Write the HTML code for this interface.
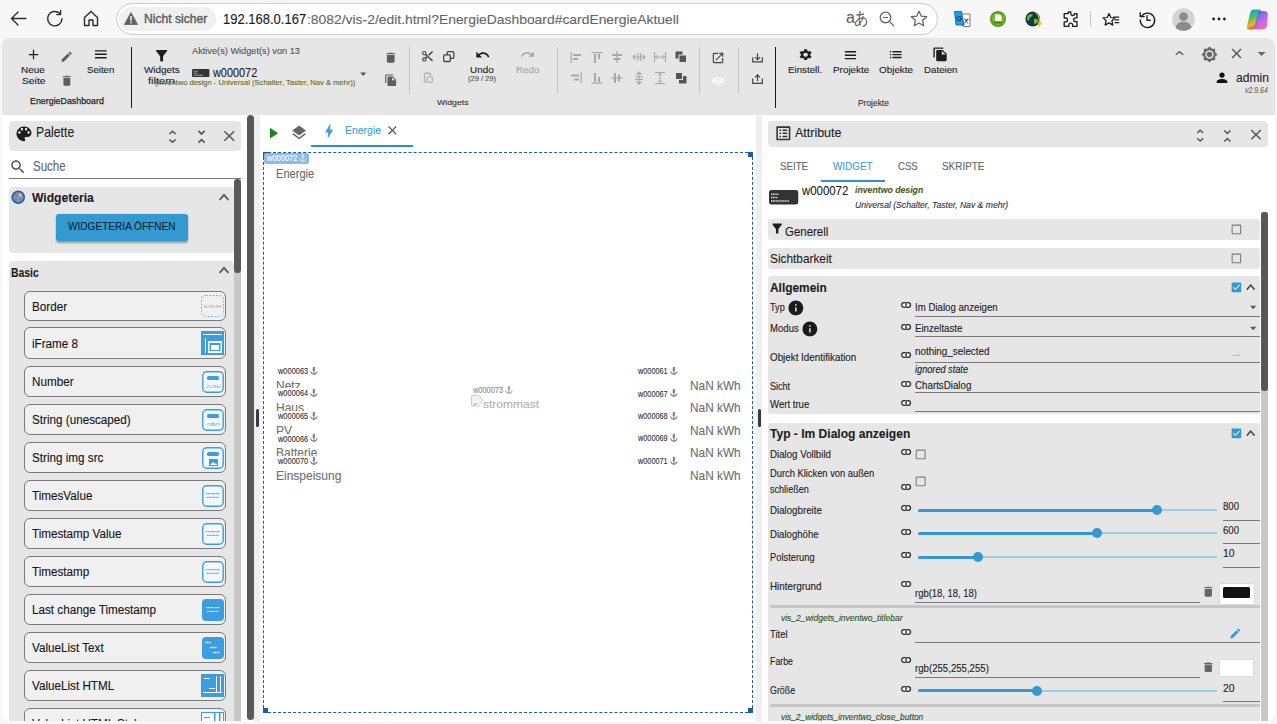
<!DOCTYPE html>
<html><head><meta charset="utf-8"><title>vis-2 editor</title>
<style>
html,body{margin:0;padding:0;width:1277px;height:724px;overflow:hidden;background:#f7f7f7}
body{position:relative;font-family:"Liberation Sans",sans-serif}
.t{position:absolute;white-space:nowrap;line-height:1;transform-origin:0 0;font-family:"Liberation Sans",sans-serif;-webkit-text-stroke:0.12px currentColor}
.r{position:absolute;box-sizing:border-box}
.i{position:absolute;overflow:visible}
</style></head><body>
<div class="r" style="left:0px;top:0px;width:1277px;height:724px;background:#f7f7f7;"></div>
<div class="r" style="left:116px;top:3px;width:822px;height:32px;border:1px solid #cbcbcb;border-radius:16px;background:#fff"></div>
<div class="r" style="left:119px;top:7px;width:97px;height:24px;border-radius:12px;background:#f0f0f0"></div>
<svg class="i" style="left:124px;top:12px;width:14px;height:13px;" viewBox="0 0 14 13"><path d="M7 0.5 L13.6 12.5 H0.4 Z" fill="#636363" stroke="#636363" stroke-width="0.8" stroke-linejoin="round"/><rect x="6.2" y="4" width="1.6" height="4.6" fill="#f0f0f0"/><rect x="6.2" y="9.6" width="1.6" height="1.6" fill="#f0f0f0"/></svg>
<div class="t " style="left:143.70px;top:13.00px;font-size:12.00px;color:#5c5c5c;transform:scaleX(1.010);-webkit-text-stroke:0.4px #5c5c5c;">Nicht sicher</div>
<div class="t " style="left:223.00px;top:13.00px;font-size:13.90px;color:#1b1b1b;transform:scaleX(0.936);">192.168.0.167</div>
<div class="t " style="left:306.80px;top:13.00px;font-size:13.60px;color:#666;transform:scaleX(1.021);">:8082/vis-2/edit.html?EnergieDashboard#cardEnergieAktuell</div>
<svg class="i" style="left:10px;top:10px;width:17px;height:17px;" viewBox="0 0 17 17"><path d="M16 8.5H2 M8 2 L1.5 8.5 L8 15" fill="none" stroke="#2b2b2b" stroke-width="1.4" stroke-linecap="round" stroke-linejoin="round"/></svg>
<svg class="i" style="left:46px;top:10px;width:18px;height:17px;" viewBox="0 0 18 17"><path d="M16 8.8 A7.2 7.2 0 1 1 13.6 3.3" fill="none" stroke="#2b2b2b" stroke-width="1.45" stroke-linecap="round"/><path d="M14.6 0.8 V4.6 H10.8" fill="none" stroke="#2b2b2b" stroke-width="1.45" stroke-linecap="round" stroke-linejoin="round"/></svg>
<svg class="i" style="left:83px;top:10px;width:16px;height:17px;" viewBox="0 0 16 17"><path d="M1.5 7.5 L8 1.5 L14.5 7.5 V15.5 H10 V10 H6 V15.5 H1.5 Z" fill="none" stroke="#2b2b2b" stroke-width="1.4" stroke-linejoin="round"/></svg>
<div class="t " style="left:846.00px;top:9.00px;font-size:16.40px;color:#5f5f5f;transform:scaleX(0.980);">a</div>
<div class="t " style="left:854.00px;top:10.00px;font-size:17.40px;color:#5f5f5f;transform:scaleX(0.843);font-family:"Liberation Sans",sans-serif;">あ</div>
<svg class="i" style="left:879px;top:11px;width:16px;height:16px;" viewBox="0 0 16 16"><circle cx="6.5" cy="6.5" r="5.3" fill="none" stroke="#5f5f5f" stroke-width="1.2"/><path d="M4 6.5H9 M10.3 10.3 L15 15" stroke="#5f5f5f" stroke-width="1.2"/></svg>
<svg class="i" style="left:910px;top:10px;width:18px;height:17px;" viewBox="0 0 18 17"><path d="M9 1.2 L11.3 6.2 L16.7 6.7 L12.6 10.3 L13.8 15.8 L9 13 L4.2 15.8 L5.4 10.3 L1.3 6.7 L6.7 6.2 Z" fill="none" stroke="#5f5f5f" stroke-width="1.2" stroke-linejoin="round"/></svg>
<svg class="i" style="left:954px;top:11px;width:17px;height:16px;" viewBox="0 0 17 16"><path d="M7.5 3 H16 V15.5 H9.5 Z" fill="#fff" stroke="#666" stroke-width="0.9"/><path d="M10.5 7.5 L14 12.5 M14 7.5 L10.5 12.5 M11 9 H14.5" stroke="#444" stroke-width="0.9"/><path d="M0.5 0.5 H7.5 L10 14 H2 Z" fill="#1aa0e8" stroke="#0a6fb8" stroke-width="0.9"/><path d="M7.5 14 L9.5 15.5 L8.6 13.8 Z" fill="#0a4f98"/><text x="2.2" y="10" font-size="7.5" fill="#0b3f7a" font-family="Liberation Sans" font-weight="700">G</text></svg>
<svg class="i" style="left:990px;top:11px;width:16px;height:16px;" viewBox="0 0 16 16"><circle cx="8" cy="8" r="8" fill="#5c9a1f"/><circle cx="8" cy="8" r="6.3" fill="#76b82a"/><path d="M5 3.5 H9.5 L11.5 5.5 V11.5 H5 Z" fill="#fff"/><path d="M9.5 3.5 V5.5 H11.5" fill="#dcdcdc"/><rect x="4.3" y="10.2" width="7.6" height="2.4" fill="#4c8a14"/></svg>
<svg class="i" style="left:1025px;top:10.5px;width:18px;height:17px;" viewBox="0 0 18 17"><circle cx="7.8" cy="8" r="7.4" fill="#0f3a4a"/><path d="M2.5 5 Q5 2 8 3.5 Q7 6 4.5 6.5 Q5 9 3 10 Q1.5 7.5 2.5 5 Z M9 8 Q12 7 13.5 9.5 Q12 13 9.5 13.5 Q8.5 11 9 8 Z" fill="#6cbc2c"/><path d="M8.5 0.8 Q14.5 4 13.8 11.5 L12.3 10.8 L14.5 16.2 L16.8 10.6 L15.2 11.2 Q15.6 3 9.2 0.2 Z" fill="#f2b90f"/></svg>
<svg class="i" style="left:1062px;top:10.5px;width:16px;height:16.5px;" viewBox="0 0 16 16.5"><path d="M6.2 1 h2.6 a0 0 0 0 1 0 0 v1.6 a1.9 1.9 0 0 0 3.8 0 v-0 h2.4 v4.2 h-1.4 a1.9 1.9 0 0 0 0 3.8 h1.4 v4.8 h-4.4 v-1.4 a1.9 1.9 0 0 0 -3.8 0 v1.4 h-4.6 v-4.6 h1.4 a1.9 1.9 0 0 0 0 -3.8 h-1.4 v-4.4 h4 z" fill="none" stroke="#1f1f1f" stroke-width="1.35" stroke-linejoin="round"/></svg>
<div class="r" style="left:1090px;top:11px;width:1px;height:16px;background:#c8c8c8;"></div>
<svg class="i" style="left:1102px;top:11px;width:18px;height:16px;" viewBox="0 0 18 16"><path d="M6.4 0.9 L8.2 4.9 L12.4 5.3 L9.3 8.2 L10.2 12.5 L6.4 10.3 L2.6 12.5 L3.5 8.2 L0.4 5.3 L4.6 4.9 Z" fill="none" stroke="#1f1f1f" stroke-width="1.25" stroke-linejoin="round" transform="translate(0.6,1.6)"/><path d="M11.2 6.2H17.2 M12.6 8.9H17.2 M12.6 11.6H17.2" stroke="#1f1f1f" stroke-width="1.25"/></svg>
<svg class="i" style="left:1138.5px;top:10.5px;width:17px;height:17px;" viewBox="0 0 17 17"><path d="M2.6 5.2 A7.2 7.2 0 1 1 1.3 9" fill="none" stroke="#1f1f1f" stroke-width="1.35" stroke-linecap="round"/><path d="M1.2 1.6 V5.6 H5.2" fill="none" stroke="#1f1f1f" stroke-width="1.35" stroke-linecap="round" stroke-linejoin="round"/><path d="M8 4.6 V9.2 H11.2" fill="none" stroke="#1f1f1f" stroke-width="1.35" stroke-linecap="round" stroke-linejoin="round"/></svg>
<svg class="i" style="left:1171.5px;top:7.8px;width:23px;height:23px;" viewBox="0 0 23 23"><circle cx="11.5" cy="11.5" r="11.3" fill="#d4d4d4"/><circle cx="11.5" cy="8.6" r="4.4" fill="#8c8c8c"/><path d="M3.6 19.6 Q5 13.8 11.5 13.8 Q18 13.8 19.4 19.6 A11.3 11.3 0 0 1 3.6 19.6 Z" fill="#8c8c8c"/></svg>
<svg class="i" style="left:1212px;top:17px;width:14px;height:4px;" viewBox="0 0 14 4"><circle cx="1.6" cy="2" r="1.4" fill="#1f1f1f"/><circle cx="7" cy="2" r="1.4" fill="#1f1f1f"/><circle cx="12.4" cy="2" r="1.4" fill="#1f1f1f"/></svg>
<svg class="i" style="left:1246px;top:8.5px;width:22.5px;height:21px;" viewBox="0 0 22.5 21"><defs><linearGradient id="cp1" x1="0" y1="0" x2="0.3" y2="1"><stop offset="0" stop-color="#1d8df2"/><stop offset="0.45" stop-color="#3fc46a"/><stop offset="0.8" stop-color="#f6b21a"/><stop offset="1" stop-color="#f0573a"/></linearGradient><linearGradient id="cp2" x1="0.2" y1="0" x2="0.8" y2="1"><stop offset="0" stop-color="#3a5cf0"/><stop offset="0.5" stop-color="#b05ce8"/><stop offset="1" stop-color="#f26aa0"/></linearGradient></defs><path d="M7.5 0.5 H13.5 Q15.5 0.5 14.8 2.8 L10.3 17 Q9.4 20.5 6 20.5 H3.5 Q0.3 20.5 0.9 17.4 L4.3 3.2 Q5 0.5 7.5 0.5 Z" fill="url(#cp1)"/><path d="M12.5 2 H17.5 Q21.5 2 21.8 5.2 L21.2 15.5 Q20.8 20.5 16.5 20.5 H9.5 Q7.2 20.5 8.2 17.8 L12 4.5 Q12.5 2 12.5 2 Z" fill="url(#cp2)" opacity="0.92"/></svg>
<div class="r" style="left:2px;top:38px;width:1273px;height:683px;background:#fff;border-radius:8px;overflow:hidden"><div class="r" style="left:0;top:0;width:1273px;height:77px;background:#e6e6e6"></div></div>
<svg class="i" style="left:28px;top:49px;width:11px;height:11px;" viewBox="0 0 11 11"><path d="M5.5 0.8V10.2M0.8 5.5H10.2" stroke="#1e1e1e" stroke-width="1.25"/></svg>
<div class="t " style="left:21.30px;top:65.00px;font-size:9.60px;color:#1e1e1e;transform:scaleX(1.033);">Neue</div>
<div class="t " style="left:21.50px;top:77.00px;font-size:9.10px;color:#1e1e1e;transform:scaleX(1.133);">Seite</div>
<svg class="i" style="left:59.83px;top:50.33px;width:13.33px;height:13.33px;" viewBox="0 0 24 24" preserveAspectRatio="none"><path fill="#5e5e5e" d="M3 17.25V21h3.75L17.81 9.94l-3.75-3.75L3 17.25zM20.71 7.04c.39-.39.39-1.02 0-1.41l-2.34-2.34c-.39-.39-1.020-.39-1.41 0l-1.83 1.83 3.75 3.75 1.830-1.83z"/></svg>
<svg class="i" style="left:59.64px;top:74.33px;width:13.71px;height:13.33px;" viewBox="0 0 24 24" preserveAspectRatio="none"><path fill="#5e5e5e" d="M6 19c0 1.1.9 2 2 2h8c1.1 0 2-.9 2-2V7H6v12zM19 4h-3.5l-1-1h-5l-1 1H5v2h14V4z"/></svg>
<svg class="i" style="left:92.75px;top:46.35px;width:15.60px;height:16.60px;" viewBox="0 0 24 24" preserveAspectRatio="none"><path fill="#1e1e1e" d="M3 18h18v-2H3v2zm0-5h18v-2H3v2zm0-7v2h18V6H3z"/></svg>
<div class="t " style="left:86.60px;top:65.00px;font-size:9.40px;color:#1e1e1e;transform:scaleX(1.028);">Seiten</div>
<div class="t " style="left:29.60px;top:96.00px;font-size:9.60px;color:#1e1e1e;transform:scaleX(0.923);-webkit-text-stroke:0.25px #1e1e1e;">EnergieDashboard</div>
<div class="r" style="left:131px;top:47px;width:1.2px;height:61px;background:#1a1a1a;"></div>
<svg class="i" style="left:153.12px;top:46.62px;width:17.25px;height:17.25px;" viewBox="0 0 24 24" preserveAspectRatio="none"><path fill="#1e1e1e" d="M4.25 5.61C6.27 8.2 10 13 10 13v6c0 .55.45 1 1 1h2c.55 0 1-.45 1-1v-6s3.72-4.8 5.74-7.39c.51-.66.04-1.61-.79-1.61H5.04c-.83 0-1.3.95-.79 1.61z"/></svg>
<div class="t " style="left:143.60px;top:66.00px;font-size:9.30px;color:#1e1e1e;transform:scaleX(1.066);">Widgets</div>
<div class="t " style="left:148.00px;top:76.00px;font-size:9.50px;color:#1e1e1e;transform:scaleX(1.162);">filtern</div>
<div class="t " style="left:192.00px;top:47.00px;font-size:8.80px;color:#555;transform:scaleX(1.047);">Aktive(s) Widget(s) von 13</div>
<svg class="i" style="left:192px;top:69.4px;width:17.4px;height:8.1px;" viewBox="0 0 17.4 8.1"><rect width="17.4" height="8.1" rx="1.2" fill="#333"/><path d="M1.5 2.2H6M1.5 4.2H5.5M1.5 6.2H11" stroke="#cfcfcf" stroke-width="1" stroke-dasharray="0.8 0.3"/></svg>
<div class="t " style="left:212.75px;top:67.00px;font-size:12.10px;color:#1e1e1e;transform:scaleX(0.901);">w000072</div>
<div class="t " style="left:154.60px;top:79.00px;font-size:7.50px;color:#62702f;transform:scaleX(1.008);">(inventwo design - Universal (Schalter, Taster, Nav &amp; mehr))</div>
<svg class="i" style="left:355.80px;top:65.70px;width:14.40px;height:15.84px;" viewBox="0 0 24 24" preserveAspectRatio="none"><path fill="#555" d="M7 10l5 5 5-5z"/></svg>
<svg class="i" style="left:382.79px;top:50.83px;width:15.43px;height:13.33px;" viewBox="0 0 24 24" preserveAspectRatio="none"><path fill="#5e5e5e" d="M6 19c0 1.1.9 2 2 2h8c1.1 0 2-.9 2-2V7H6v12zM19 4h-3.5l-1-1h-5l-1 1H5v2h14V4z"/></svg>
<svg class="i" style="left:383.84px;top:73.98px;width:13.89px;height:12.55px;" viewBox="0 0 24 24" preserveAspectRatio="none"><path fill="#5e5e5e" d="M16 1H4c-1.1 0-2 .9-2 2v14h2V3h12V1zm-1 4l6 6v10c0 1.1-.9 2-2 2H7.99C6.89 23 6 22.1 6 21l.01-14c0-1.1.89-2 1.99-2h7zm-1 7h5.5L14 6.5V12z"/></svg>
<div class="r" style="left:409px;top:47px;width:1px;height:47px;background:#c4c4c4;"></div>
<svg class="i" style="left:420.90px;top:50.45px;width:13.20px;height:12.60px;" viewBox="0 0 24 24" preserveAspectRatio="none"><path fill="#444" d="M9.64 7.64c.23-.5.36-1.05.36-1.64 0-2.21-1.79-4-4-4S2 3.790 2 6s1.79 4 4 4c.59 0 1.14-.13 1.64-.36L10 12l-2.36 2.36C7.14 14.13 6.59 14 6 14c-2.21 0-4 1.79-4 4s1.79 4 4 4 4-1.79 4-4c0-.59-.13-1.14-.36-1.64L12 14l7 7h3v-1L9.64 7.64zM6 8c-1.1 0-2-.89-2-2s.9-2 2-2 2 .89 2 2-.9 2-2 2zm0 12c-1.1 0-2-.89-2-2s.9-2 2-2 2 .89 2 2-.9 2-2 2zm6-7.5c-.28 0-.5-.22-.5-.5s.22-.5.5-.5.5.22.5.5-.22.5-.5.5zM19 3l-6 6 2 2 7-7V3z"/></svg>
<svg class="i" style="left:442.9px;top:51.3px;width:11.5px;height:11px;" viewBox="0 0 11.5 11"><rect x="4.2" y="0.7" width="6.6" height="6.6" rx="1" fill="none" stroke="#444" stroke-width="1.3"/><rect x="0.7" y="3.9" width="6.6" height="6.6" rx="1" fill="#e6e6e6" stroke="#444" stroke-width="1.3"/></svg>
<svg class="i" style="left:422px;top:72.2px;width:11px;height:11px;" viewBox="0 0 11 11"><path d="M2.5 1.5H8.5V4M2.5 1.5V10H4.5" fill="none" stroke="#b0b0b0" stroke-width="1.2"/><rect x="3.6" y="0.4" width="3.8" height="1.8" fill="#b0b0b0"/><rect x="5" y="5" width="5.3" height="5.3" rx="0.8" fill="none" stroke="#b0b0b0" stroke-width="1.2"/></svg>
<svg class="i" style="left:474.51px;top:46.67px;width:15.48px;height:15.88px;" viewBox="0 0 24 24" preserveAspectRatio="none"><path fill="#1e1e1e" d="M12.5 8c-2.65 0-5.05.99-6.9 2.6L2 7v9h9l-3.62-3.62c1.39-1.16 3.16-1.88 5.12-1.88 3.54 0 6.55 2.31 7.6 5.5l2.37-.78C21.08 11.03 17.15 8 12.5 8z"/></svg>
<div class="t " style="left:470.00px;top:65.00px;font-size:9.40px;color:#1e1e1e;transform:scaleX(1.055);">Undo</div>
<div class="t " style="left:468.00px;top:75.00px;font-size:7.90px;color:#555;transform:scaleX(0.951);">(29 / 29)</div>
<svg class="i" style="left:520.02px;top:48.09px;width:15.25px;height:13.07px;" viewBox="0 0 24 24" preserveAspectRatio="none"><path fill="#a8a8a8" d="M18.4 10.6C16.55 8.99 14.15 8 11.5 8c-4.65 0-8.58 3.03-9.96 7.22L3.9 16c1.05-3.19 4.05-5.5 7.6-5.5 1.95 0 3.73.72 5.12 1.88L13 16h9V7l-3.6 3.6z"/></svg>
<div class="t " style="left:515.60px;top:65.00px;font-size:9.40px;color:#a8a8a8;transform:scaleX(1.042);">Redo</div>
<div class="t " style="left:437.00px;top:99.00px;font-size:8.00px;color:#333;transform:scaleX(1.094);">Widgets</div>
<div class="r" style="left:557px;top:47px;width:1px;height:47px;background:#c4c4c4;"></div>
<svg class="i" style="left:568.6px;top:49.7px;width:14px;height:14px;" viewBox="0 0 14 14"><rect x="1.5" y="2" width="1.2" height="11" fill="#a8a8a8"/><rect x="4" y="4" width="8" height="2" fill="#a8a8a8"/><rect x="4" y="8" width="5" height="2" fill="#a8a8a8"/></svg>
<svg class="i" style="left:589.6px;top:49.7px;width:14px;height:14px;" viewBox="0 0 14 14"><rect x="1.5" y="2" width="11" height="1.2" fill="#a8a8a8"/><rect x="4" y="4" width="2" height="9" fill="#a8a8a8"/><rect x="8" y="4" width="2" height="5" fill="#a8a8a8"/></svg>
<svg class="i" style="left:610.4px;top:49.7px;width:14px;height:14px;" viewBox="0 0 14 14"><rect x="6.4" y="1" width="1.2" height="12" fill="#a8a8a8"/><rect x="2" y="4" width="10" height="2" fill="#a8a8a8"/><rect x="3.5" y="8" width="7" height="2" fill="#a8a8a8"/></svg>
<svg class="i" style="left:631.8px;top:49.7px;width:14px;height:14px;" viewBox="0 0 14 14"><path d="M1 7h12 M3.5 4.5 L1 7 L3.5 9.5 M10.5 4.5 L13 7 L10.5 9.5" fill="none" stroke="#a8a8a8" stroke-width="1.1"/><rect x="5.5" y="3" width="1" height="8" fill="#a8a8a8"/><rect x="8" y="3" width="1" height="8" fill="#a8a8a8"/></svg>
<svg class="i" style="left:652.5px;top:49.7px;width:14px;height:14px;" viewBox="0 0 14 14"><rect x="1" y="2" width="1.1" height="10" fill="#a8a8a8"/><rect x="12" y="2" width="1.1" height="10" fill="#a8a8a8"/><path d="M2.5 7h9 M4.5 5 L2.5 7 L4.5 9 M9.5 5 L11.5 7 L9.5 9" fill="none" stroke="#a8a8a8" stroke-width="1"/></svg>
<svg class="i" style="left:674px;top:49.7px;width:14px;height:14px;" viewBox="0 0 14 14"><rect x="1.5" y="1.5" width="7" height="7" fill="#555"/><rect x="5" y="5" width="7.5" height="7.5" fill="#555" stroke="#e6e6e6" stroke-width="1"/></svg>
<svg class="i" style="left:568.6px;top:71.3px;width:14px;height:14px;" viewBox="0 0 14 14"><rect x="11.5" y="1" width="1.2" height="11" fill="#a8a8a8"/><rect x="2" y="3.5" width="8" height="2" fill="#a8a8a8"/><rect x="5" y="7.5" width="5" height="2" fill="#a8a8a8"/></svg>
<svg class="i" style="left:589.6px;top:71.3px;width:14px;height:14px;" viewBox="0 0 14 14"><rect x="1.5" y="11.5" width="11" height="1.2" fill="#a8a8a8"/><rect x="4" y="2" width="2" height="9" fill="#a8a8a8"/><rect x="8" y="6" width="2" height="5" fill="#a8a8a8"/></svg>
<svg class="i" style="left:610.4px;top:71.3px;width:14px;height:14px;" viewBox="0 0 14 14"><rect x="1" y="6.4" width="12" height="1.2" fill="#a8a8a8"/><rect x="4" y="2" width="2" height="10" fill="#a8a8a8"/><rect x="8" y="3.5" width="2" height="7" fill="#a8a8a8"/></svg>
<svg class="i" style="left:631.8px;top:71.3px;width:14px;height:14px;" viewBox="0 0 14 14"><path d="M7 1v12 M4.5 3.5 L7 1 L9.5 3.5 M4.5 10.5 L7 13 L9.5 10.5" fill="none" stroke="#a8a8a8" stroke-width="1.1"/><rect x="3" y="5.5" width="8" height="1" fill="#a8a8a8"/><rect x="3" y="8" width="8" height="1" fill="#a8a8a8"/></svg>
<svg class="i" style="left:652.5px;top:71.3px;width:14px;height:14px;" viewBox="0 0 14 14"><rect x="2" y="1" width="10" height="1.1" fill="#a8a8a8"/><rect x="2" y="12" width="10" height="1.1" fill="#a8a8a8"/><path d="M7 2.5v9 M5 4.5 L7 2.5 L9 4.5 M5 9.5 L7 11.5 L9 9.5" fill="none" stroke="#a8a8a8" stroke-width="1"/></svg>
<svg class="i" style="left:674px;top:71.3px;width:14px;height:14px;" viewBox="0 0 14 14"><rect x="5" y="5" width="7.5" height="7.5" fill="#555"/><rect x="1.5" y="1.5" width="7" height="7" fill="#555" stroke="#e6e6e6" stroke-width="1"/></svg>
<div class="r" style="left:699px;top:47px;width:1px;height:47px;background:#c4c4c4;"></div>
<svg class="i" style="left:711.25px;top:50.75px;width:14.00px;height:14.00px;" viewBox="0 0 24 24" preserveAspectRatio="none"><path fill="#444" d="M19 19H5V5h7V3H5c-1.11 0-2 .9-2 2v14c0 1.1.89 2 2 2h14c1.1 0 2-.9 2-2v-7h-2v7zM14 3v2h3.59l-9.83 9.83 1.41 1.41L19 6.41V10h2V3h-7z"/></svg>
<svg class="i" style="left:711.41px;top:74.90px;width:14.18px;height:11.20px;" viewBox="0 0 24 24" preserveAspectRatio="none"><path fill="#fafafa" d="M12 4.5C7 4.5 2.73 7.61 1 12c1.73 4.39 6 7.5 11 7.5s9.27-3.11 11-7.5c-1.73-4.39-6-7.5-11-7.5zM12 17c-2.76 0-5-2.24-5-5s2.24-5 5-5 5 2.24 5 5-2.24 5-5 5zm0-8c-1.66 0-3 1.34-3 3s1.34 3 3 3 3-1.34 3-3-1.34-3-3-3z"/></svg>
<div class="r" style="left:738px;top:47px;width:1px;height:47px;background:#c4c4c4;"></div>
<svg class="i" style="left:751.5px;top:52.8px;width:11px;height:9.6px;" viewBox="0 0 11 9.6"><path d="M0.7 4.2V8.9H10.3V4.2" fill="none" stroke="#444" stroke-width="1.2"/><path d="M5.5 0.2V6.6M3 4.2L5.5 6.7L8 4.2" fill="none" stroke="#444" stroke-width="1.2"/></svg>
<svg class="i" style="left:751.5px;top:73.5px;width:11px;height:10px;" viewBox="0 0 11 10"><path d="M0.7 4.6V9.3H10.3V4.6" fill="none" stroke="#444" stroke-width="1.2"/><path d="M5.5 7.2V0.9M3 3.3L5.5 0.8L8 3.3" fill="none" stroke="#444" stroke-width="1.2"/></svg>
<div class="r" style="left:775px;top:47px;width:1.2px;height:61px;background:#1a1a1a;"></div>
<svg class="i" style="left:797.79px;top:48.08px;width:15.23px;height:13.44px;" viewBox="0 0 24 24" preserveAspectRatio="none"><path fill="#1e1e1e" d="M19.14 12.94c.04-.3.06-.61.06-.94 0-.32-.02-.64-.07-.94l2.03-1.58c.18-.14.23-.41.12-.61l-1.92-3.32c-.12-.22-.37-.29-.59-.22l-2.39.96c-.5-.38-1.03-.7-1.62-.94l-.36-2.54c-.04-.24-.24-.41-.48-.41h-3.84c-.24 0-.43.17-.47.41l-.36 2.54c-.59.24-1.13.57-1.62.94l-2.39-.96c-.22-.08-.47 0-.59.22L2.74 8.87c-.12.21-.08.47.12.61l2.03 1.58c-.05.3-.09.63-.09.94s.02.64.07.94l-2.03 1.58c-.18.14-.23.41-.12.61l1.92 3.320c.12.22.37.29.59.22l2.39-.96c.5.38 1.03.7 1.62.94l.36 2.54c.05.24.24.41.48.41h3.84c.24 0 .44-.17.47-.41l.36-2.54c.59-.24 1.13-.56 1.62-.94l2.39.96c.22.08.47 0 .59-.22l1.92-3.32c.12-.22.07-.47-.12-.61l-2.01-1.58zM12 15.6c-1.98 0-3.6-1.62-3.6-3.6s1.62-3.6 3.6-3.6 3.6 1.62 3.6 3.6-1.62 3.6-3.6 3.6z"/></svg>
<div class="t " style="left:788.30px;top:65.00px;font-size:9.90px;color:#1e1e1e;transform:scaleX(0.987);">Einstell.</div>
<svg class="i" style="left:843.13px;top:46.50px;width:14.93px;height:16.40px;" viewBox="0 0 24 24" preserveAspectRatio="none"><path fill="#1e1e1e" d="M3 18h18v-2H3v2zm0-5h18v-2H3v2zm0-7v2h18V6H3z"/></svg>
<div class="t " style="left:832.50px;top:65.00px;font-size:9.70px;color:#1e1e1e;transform:scaleX(1.020);">Projekte</div>
<svg class="i" style="left:887.87px;top:46.16px;width:15.47px;height:17.28px;" viewBox="0 0 24 24" preserveAspectRatio="none"><path fill="#1e1e1e" d="M3 13h2v-2H3v2zm0 4h2v-2H3v2zm0-8h2V7H3v2zm4 4h14v-2H7v2zm0 4h14v-2H7v2zM7 7v2h14V7H7z"/></svg>
<div class="t " style="left:878.50px;top:65.00px;font-size:9.70px;color:#1e1e1e;transform:scaleX(1.020);">Objekte</div>
<svg class="i" style="left:932.10px;top:46.58px;width:16.80px;height:14.84px;" viewBox="0 0 24 24" preserveAspectRatio="none"><path fill="#1e1e1e" d="M16 1H4c-1.1 0-2 .9-2 2v14h2V3h12V1zm-1 4l6 6v10c0 1.1-.9 2-2 2H7.99C6.89 23 6 22.1 6 21l.01-14c0-1.1.89-2 1.99-2h7zm-1 7h5.5L14 6.5V12z"/></svg>
<div class="t " style="left:923.80px;top:65.00px;font-size:9.90px;color:#1e1e1e;transform:scaleX(0.985);">Dateien</div>
<div class="t " style="left:857.60px;top:98.00px;font-size:9.60px;color:#333;transform:scaleX(0.877);">Projekte</div>
<svg class="i" style="left:1170.75px;top:46.14px;width:17.00px;height:14.57px;" viewBox="0 0 24 24" preserveAspectRatio="none"><path fill="#555" d="M12 8l-6 6 1.41 1.41L12 10.83l4.59 4.58L18 14z"/></svg>
<svg class="i" style="left:1200.51px;top:45.51px;width:16.98px;height:16.98px;" viewBox="0 0 24 24" preserveAspectRatio="none"><path fill="#666" d="M20 8.69V4h-4.69L12 .69 8.69 4H4v4.69L.69 12 4 15.31V20h4.69L12 23.31 15.31 20H20v-4.69L23.31 12 20 8.69zM12 18c-3.31 0-6-2.69-6-6s2.69-6 6-6 6 2.69 6 6-2.69 6-6 6zm0-10c-2.21 0-4 1.79-4 4s1.79 4 4 4 4-1.79 4-4-1.79-4-4-4z"/></svg>
<svg class="i" style="left:1228.43px;top:45.43px;width:17.14px;height:17.14px;" viewBox="0 0 24 24" preserveAspectRatio="none"><path fill="#555" d="M19 6.41L17.59 5 12 10.59 6.41 5 5 6.41 10.59 12 5 17.59 6.41 19 12 13.41 17.59 19 19 17.59 13.41 12z"/></svg>
<svg class="i" style="left:1251.90px;top:44.00px;width:19.20px;height:19.20px;" viewBox="0 0 24 24" preserveAspectRatio="none"><path fill="#666" d="M7 10l5 5 5-5z"/></svg>
<svg class="i" style="left:1214.42px;top:69.80px;width:16.05px;height:15.60px;" viewBox="0 0 24 24" preserveAspectRatio="none"><path fill="#111" d="M12 12c2.21 0 4-1.79 4-4s-1.79-4-4-4-4 1.79-4 4 1.79 4 4 4zm0 2c-2.67 0-8 1.34-8 4v2h16v-2c0-2.66-5.33-4-8-4z"/></svg>
<div class="t " style="left:1236.00px;top:72.00px;font-size:12.60px;color:#1e1e1e;transform:scaleX(0.961);">admin</div>
<div class="t " style="left:1244.70px;top:86.00px;font-size:8.50px;color:#666;font-style:italic;transform:scaleX(0.818);">v2.9.64</div>
<div class="r" style="left:9px;top:121px;width:232px;height:29.5px;background:#e6e6e6;border-radius:4px"></div>
<svg class="i" style="left:13.50px;top:123.85px;width:20.00px;height:19.60px;" viewBox="0 0 24 24" preserveAspectRatio="none"><path fill="#1e1e1e" d="M12 3c-4.97 0-9 4.03-9 9s4.03 9 9 9c.83 0 1.5-.67 1.5-1.5 0-.39-.15-.74-.39-1.01-.23-.26-.38-.61-.38-.99 0-.83.67-1.5 1.5-1.5H16c2.76 0 5-2.24 5-5 0-4.42-4.03-8-9-8zm-5.5 9c-.83 0-1.5-.67-1.5-1.5S5.67 9 6.5 9 8 9.67 8 10.5 7.33 12 6.5 12zm3-4C8.67 8 8 7.33 8 6.5S8.67 5 9.5 5s1.5.67 1.5 1.5S10.33 8 9.5 8zm5 0c-.83 0-1.5-.67-1.5-1.5S13.67 5 14.5 5s1.5.67 1.5 1.5S15.33 8 14.5 8zm3 4c-.83 0-1.5-.67-1.5-1.5S16.67 9 17.5 9s1.5.67 1.5 1.5-.67 1.5-1.5 1.5z"/></svg>
<div class="t " style="left:36.00px;top:125.00px;font-size:14.40px;color:#1e1e1e;transform:scaleX(0.854);">Palette</div>
<svg class="i" style="left:163.40px;top:127.52px;width:19.11px;height:17.47px;" viewBox="0 0 24 24" preserveAspectRatio="none"><path fill="#555" d="M12 5.83L15.17 9l1.41-1.41L12 3 7.41 7.59 8.83 9 12 5.83zm0 12.34L8.83 15l-1.41 1.41L12 21l4.59-4.59L15.17 15 12 18.17z"/></svg>
<svg class="i" style="left:191.51px;top:126.75px;width:19.08px;height:19.50px;" viewBox="0 0 24 24" preserveAspectRatio="none"><path fill="#555" d="M7.41 18.59L8.83 20 12 16.83 15.17 20l1.41-1.41L12 14l-4.59 4.59zm9.18-13.18L15.17 4 12 7.17 8.83 4 7.41 5.41 12 10l4.59-4.59z"/></svg>
<svg class="i" style="left:219.74px;top:127.25px;width:18.51px;height:18.00px;" viewBox="0 0 24 24" preserveAspectRatio="none"><path fill="#555" d="M19 6.41L17.59 5 12 10.59 6.41 5 5 6.41 10.59 12 5 17.59 6.41 19 12 13.41 17.59 19 19 17.59 13.41 12z"/></svg>
<svg class="i" style="left:8.77px;top:157.77px;width:17.84px;height:17.84px;" viewBox="0 0 24 24" preserveAspectRatio="none"><path fill="#555" d="M15.5 14h-.79l-.28-.27C15.41 12.59 16 11.11 16 9.5 16 5.91 13.09 3 9.5 3S3 5.91 3 9.5 5.91 16 9.5 16c1.61 0 3.09-.59 4.23-1.57l.27.28v.79l5 4.99L20.49 19l-4.99-5zm-6 0C7.01 14 5 11.99 5 9.5S7.01 5 9.5 5 14 7.01 14 9.5 11.99 14 9.5 14z"/></svg>
<div class="t " style="left:33.30px;top:159.00px;font-size:14.60px;color:#666;transform:scaleX(0.790);">Suche</div>
<div class="r" style="left:9px;top:177.7px;width:232px;height:1px;background:#7a7a7a;"></div>
<div class="r" style="left:9px;top:187.4px;width:224.5px;height:65.6px;background:#e6e6e6;border-radius:4px"></div>
<svg class="i" style="left:11.3px;top:189.5px;width:14.5px;height:14.5px;" viewBox="0 0 14.5 14.5"><circle cx="7.25" cy="7.25" r="6.8" fill="#2f5f9a"/><circle cx="7.25" cy="7.25" r="5" fill="#6aa0d8"/><circle cx="5" cy="5.5" r="1.6" fill="#e05050"/><circle cx="9.3" cy="5" r="1.5" fill="#f0c040"/><circle cx="5.2" cy="9.3" r="1.5" fill="#40b060"/><circle cx="9.4" cy="9.3" r="1.5" fill="#b060d0"/></svg>
<div class="t " style="left:32.00px;top:192.00px;font-size:12.40px;color:#1e1e1e;font-weight:700;transform:scaleX(0.978);">Widgeteria</div>
<svg class="i" style="left:214.00px;top:185.94px;width:20.00px;height:22.67px;" viewBox="0 0 24 24" preserveAspectRatio="none"><path fill="#555" d="M12 8l-6 6 1.41 1.41L12 10.83l4.59 4.58L18 14z"/></svg>
<div class="r" style="left:56px;top:214.2px;width:132px;height:26.5px;background:#3399d0;border-radius:3px;box-shadow:0 1.5px 2px rgba(0,0,0,0.35)"></div>
<div class="t " style="left:67.70px;top:221.00px;font-size:10.80px;color:#152535;transform:scaleX(0.934);">WIDGETERIA ÖFFNEN</div>
<div class="r" style="left:9px;top:261.4px;width:224.5px;height:470px;background:#e6e6e6;border-radius:4px"></div>
<div class="t " style="left:11.00px;top:267.00px;font-size:12.60px;color:#1e1e1e;font-weight:700;transform:scaleX(0.826);">Basic</div>
<svg class="i" style="left:214.00px;top:259.44px;width:20.00px;height:22.67px;" viewBox="0 0 24 24" preserveAspectRatio="none"><path fill="#555" d="M12 8l-6 6 1.41 1.41L12 10.83l4.59 4.58L18 14z"/></svg>
<div class="r" style="left:24.2px;top:291.1px;width:202.3px;height:29.5px;background:#f0f0f0;border:1px solid #7a7a7a;border-radius:6px"></div>
<div class="t " style="left:31.50px;top:301.00px;font-size:12.30px;color:#161616;transform:scaleX(0.950);">Border</div>
<svg class="i" style="left:200.6px;top:294.85px;width:23px;height:22px;" viewBox="0 0 23 22"><rect x="0.5" y="0.5" width="22" height="21" rx="4" fill="none" stroke="#7bb8e8" stroke-dasharray="2 1.5"/><text x="11.5" y="13" font-size="4.2" text-anchor="middle" fill="#a0a8c0" font-family="Liberation Sans">BORDER</text></svg>
<div class="r" style="left:24.2px;top:327px;width:202.3px;height:31.5px;background:#f0f0f0;border:1px solid #7a7a7a;border-radius:6px"></div>
<div class="t " style="left:31.50px;top:338.00px;font-size:12.30px;color:#161616;transform:scaleX(0.950);">iFrame 8</div>
<svg class="i" style="left:200.6px;top:330.75px;width:23px;height:24px;" viewBox="0 0 23 24"><rect x="0" y="0" width="23" height="24" fill="#3a9ee0"/><rect x="2" y="3" width="19" height="1" fill="#fff"/><rect x="4" y="7" width="1" height="15" fill="#fff"/><rect x="7" y="10" width="14" height="12" fill="#fff"/><rect x="8.5" y="12" width="11" height="8" fill="#3a9ee0"/><rect x="10" y="14" width="8" height="5" fill="#fff"/></svg>
<div class="r" style="left:24.2px;top:365.5px;width:202.3px;height:31.0px;background:#f0f0f0;border:1px solid #7a7a7a;border-radius:6px"></div>
<div class="t " style="left:31.50px;top:376.00px;font-size:12.30px;color:#161616;transform:scaleX(0.950);">Number</div>
<svg class="i" style="left:201.6px;top:370.5px;width:22px;height:22px;" viewBox="0 0 22 22"><rect x="0.8" y="0.8" width="20.4" height="20.4" rx="4" fill="#f4f8fc" stroke="#3a9ee0" stroke-width="1.4"/><rect x="5" y="5" width="12" height="4" rx="1.5" fill="#3a9ee0"/><text x="11.5" y="16.5" font-size="4" text-anchor="middle" fill="#3a9ee0" font-family="Liberation Sans">25.2940</text></svg>
<div class="r" style="left:24.2px;top:403.5px;width:202.3px;height:31.0px;background:#f0f0f0;border:1px solid #7a7a7a;border-radius:6px"></div>
<div class="t " style="left:31.50px;top:414.00px;font-size:12.30px;color:#161616;transform:scaleX(0.950);">String (unescaped)</div>
<svg class="i" style="left:201.6px;top:408.5px;width:22px;height:22px;" viewBox="0 0 22 22"><rect x="0.8" y="0.8" width="20.4" height="20.4" rx="4" fill="#f4f8fc" stroke="#3a9ee0" stroke-width="1.4"/><rect x="5" y="5" width="12" height="4" rx="1.5" fill="#3a9ee0"/><text x="11.5" y="17" font-size="5.5" text-anchor="middle" fill="#3a9ee0" font-family="Liberation Sans">&lt;div&gt;</text></svg>
<div class="r" style="left:24.2px;top:441.5px;width:202.3px;height:31.0px;background:#f0f0f0;border:1px solid #7a7a7a;border-radius:6px"></div>
<div class="t " style="left:31.50px;top:452.00px;font-size:12.30px;color:#161616;transform:scaleX(0.950);">String img src</div>
<svg class="i" style="left:201.6px;top:446.5px;width:22px;height:22px;" viewBox="0 0 22 22"><rect x="0.8" y="0.8" width="20.4" height="20.4" rx="4" fill="#f4f8fc" stroke="#3a9ee0" stroke-width="1.4"/><rect x="5" y="5" width="12" height="4" rx="1.5" fill="#3a9ee0"/><rect x="7" y="12" width="9" height="7" fill="#3a9ee0"/><path d="M8 18 L11 15 L13 17 L14 16 L15 18 Z" fill="#fff"/></svg>
<div class="r" style="left:24.2px;top:479.5px;width:202.3px;height:31.0px;background:#f0f0f0;border:1px solid #7a7a7a;border-radius:6px"></div>
<div class="t " style="left:31.50px;top:490.00px;font-size:12.30px;color:#161616;transform:scaleX(0.950);">TimesValue</div>
<svg class="i" style="left:201.6px;top:484.5px;width:22px;height:22px;" viewBox="0 0 22 22"><rect x="0.8" y="0.8" width="20.4" height="20.4" rx="4" fill="#f4f8fc" stroke="#3a9ee0" stroke-width="1.4"/><path d="M4 8.6H18M5 12.4H17" stroke="#5aa6e0" stroke-width="1.4" stroke-dasharray="1.2 0.5"/></svg>
<div class="r" style="left:24.2px;top:517.5px;width:202.3px;height:31.0px;background:#f0f0f0;border:1px solid #7a7a7a;border-radius:6px"></div>
<div class="t " style="left:31.50px;top:528.00px;font-size:12.30px;color:#161616;transform:scaleX(0.950);">Timestamp Value</div>
<svg class="i" style="left:201.6px;top:522.5px;width:22px;height:22px;" viewBox="0 0 22 22"><rect x="0.8" y="0.8" width="20.4" height="20.4" rx="4" fill="#f4f8fc" stroke="#3a9ee0" stroke-width="1.4"/><path d="M4 8.6H18M5 12.4H17" stroke="#5aa6e0" stroke-width="1.4" stroke-dasharray="1.2 0.5"/></svg>
<div class="r" style="left:24.2px;top:555.5px;width:202.3px;height:31.0px;background:#f0f0f0;border:1px solid #7a7a7a;border-radius:6px"></div>
<div class="t " style="left:31.50px;top:566.00px;font-size:12.30px;color:#161616;transform:scaleX(0.950);">Timestamp</div>
<svg class="i" style="left:201.6px;top:560.5px;width:22px;height:22px;" viewBox="0 0 22 22"><rect x="0.8" y="0.8" width="20.4" height="20.4" rx="4" fill="#f4f8fc" stroke="#3a9ee0" stroke-width="1.4"/><path d="M4 8.6H18M5 12.4H17" stroke="#5aa6e0" stroke-width="1.4" stroke-dasharray="1.2 0.5"/></svg>
<div class="r" style="left:24.2px;top:593.5px;width:202.3px;height:31.0px;background:#f0f0f0;border:1px solid #7a7a7a;border-radius:6px"></div>
<div class="t " style="left:31.50px;top:604.00px;font-size:12.30px;color:#161616;transform:scaleX(0.950);">Last change Timestamp</div>
<svg class="i" style="left:201.6px;top:598.5px;width:22px;height:22px;" viewBox="0 0 22 22"><rect x="0" y="0" width="22" height="22" rx="4" fill="#3a9ee0"/><path d="M4 8.6H18M5 12.4H17" stroke="#d8ecfa" stroke-width="1.4" stroke-dasharray="1.2 0.5"/></svg>
<div class="r" style="left:24.2px;top:631.5px;width:202.3px;height:31.0px;background:#f0f0f0;border:1px solid #7a7a7a;border-radius:6px"></div>
<div class="t " style="left:31.50px;top:642.00px;font-size:12.30px;color:#161616;transform:scaleX(0.950);">ValueList Text</div>
<svg class="i" style="left:201.6px;top:636.5px;width:22px;height:22px;" viewBox="0 0 22 22"><rect x="0" y="0" width="22" height="22" rx="4" fill="#3a9ee0"/><path d="M3 5.5H9M8 10.5H15M11 15.5H18" stroke="#e8f4fc" stroke-width="1.3" stroke-dasharray="1.2 0.5"/></svg>
<div class="r" style="left:24.2px;top:669.5px;width:202.3px;height:31.0px;background:#f0f0f0;border:1px solid #7a7a7a;border-radius:6px"></div>
<div class="t " style="left:31.50px;top:680.00px;font-size:12.30px;color:#161616;transform:scaleX(0.950);">ValueList HTML</div>
<svg class="i" style="left:200.6px;top:673.5px;width:23px;height:23px;" viewBox="0 0 23 23"><rect x="0" y="0" width="23" height="23" fill="#3a9ee0"/><rect x="3" y="4" width="6" height="1" fill="#fff"/><rect x="15" y="2" width="1" height="16" fill="#fff"/><rect x="19" y="2" width="1" height="16" fill="#fff"/><rect x="2" y="18" width="19" height="1" fill="#fff"/><rect x="8" y="14" width="6" height="1" fill="#fff"/></svg>
<div class="r" style="left:24.2px;top:707.5px;width:202.3px;height:31.0px;background:#f0f0f0;border:1px solid #7a7a7a;border-radius:6px"></div>
<div class="t " style="left:31.50px;top:718.00px;font-size:12.30px;color:#161616;transform:scaleX(0.950);">ValueList HTML Style</div>
<svg class="i" style="left:200.6px;top:711.5px;width:23px;height:23px;" viewBox="0 0 23 23"><rect x="0.5" y="0.5" width="22" height="22" fill="#fff" stroke="#3a9ee0"/><rect x="13" y="1" width="1.5" height="21" fill="#3a9ee0"/><rect x="18" y="1" width="1.5" height="21" fill="#3a9ee0"/><rect x="3" y="5" width="6" height="1" fill="#3a9ee0"/></svg>
<div class="r" style="left:234.2px;top:272px;width:6.5px;height:449px;background:#c8c8c8;"></div>
<div class="r" style="left:234.2px;top:178.8px;width:6.6px;height:94px;background:#5a5a5a;border-radius:3.3px"></div>
<div class="r" style="left:247px;top:115px;width:7px;height:604.7px;background:#585858;border-radius:3.5px"></div>
<div class="r" style="left:254px;top:115px;width:6px;height:606px;background:#eef0f0;"></div>
<div class="r" style="left:255.7px;top:409px;width:3.5px;height:17.5px;background:#383850;border-radius:1.75px"></div>
<svg class="i" style="left:264.04px;top:123.68px;width:17.89px;height:18.34px;" viewBox="0 0 24 24" preserveAspectRatio="none"><path fill="#138a13" d="M8 5v14l11-7z"/></svg>
<svg class="i" style="left:289.72px;top:124.15px;width:18.27px;height:17.37px;" viewBox="0 0 24 24" preserveAspectRatio="none"><path fill="#666" d="M11.99 18.54l-7.37-5.73L3 14.07l9 7 9-7-1.63-1.27-7.38 5.74zM12 16l7.36-5.73L21 9l-9-7-9 7 1.63 1.27L12 16z"/></svg>
<svg class="i" style="left:319.84px;top:122.07px;width:18.24px;height:17.87px;" viewBox="0 0 24 24" preserveAspectRatio="none"><path fill="#3a9fd9" d="M11 21h-1l1-7H7.5c-.58 0-.57-.32-.38-.66.19-.34.05-.08.07-.12C8.48 10.94 10.42 7.54 13 3h1l-1 7h3.5c.49 0 .56.33.47.51l-.07.15C12.96 17.55 11 21 11 21z"/></svg>
<div class="t " style="left:345.00px;top:125.00px;font-size:11.50px;color:#3a9fd9;transform:scaleX(0.909);">Energie</div>
<svg class="i" style="left:384.93px;top:123.13px;width:14.74px;height:14.74px;" viewBox="0 0 24 24" preserveAspectRatio="none"><path fill="#555" d="M19 6.41L17.59 5 12 10.59 6.41 5 5 6.41 10.59 12 5 17.59 6.41 19 12 13.41 17.59 19 19 17.59 13.41 12z"/></svg>
<div class="r" style="left:310.8px;top:144.8px;width:102.2px;height:2.4px;background:#2492d2;"></div>
<div class="r" style="left:263px;top:152.2px;width:490px;height:560.8px;border:1px dashed #1d5aa6"></div>
<div class="r" style="left:263px;top:152.2px;width:5px;height:5px;background:#1d5aa6;"></div>
<div class="r" style="left:748px;top:152.2px;width:5px;height:5px;background:#1d5aa6;"></div>
<div class="r" style="left:263px;top:708px;width:5px;height:5px;background:#1d5aa6;"></div>
<div class="r" style="left:748px;top:708px;width:5px;height:5px;background:#1d5aa6;"></div>
<div class="r" style="left:264.4px;top:152.6px;width:44.6px;height:11px;background:#8fbce4;border-radius:2px"></div>
<div class="t " style="left:266.54px;top:153.00px;font-size:9.90px;color:#fff;transform:scaleX(0.758);">w000072</div>
<svg class="i" style="left:299.00px;top:154.00px;width:7.50px;height:7.70px" viewBox="0 0 8 8" preserveAspectRatio="none"><g fill="none" stroke="#e8f0f8" stroke-width="0.9"><circle cx="4" cy="1.1" r="0.85"/><path d="M4 1.95V7.6M2.6 3.1H5.4M0.7 4.6Q1 7.6 4 7.6Q7 7.6 7.3 4.6"/></g></svg>
<div class="t " style="left:276.00px;top:167.00px;font-size:13.00px;color:#6a6a6a;transform:scaleX(0.853);">Energie</div>
<div class="t " style="left:275.80px;top:380.00px;font-size:12.90px;color:#707070;transform:scaleX(0.930);">Netz</div>
<div class="t " style="left:275.80px;top:402.00px;font-size:12.90px;color:#707070;transform:scaleX(0.930);">Haus</div>
<div class="t " style="left:275.80px;top:425.00px;font-size:12.90px;color:#707070;transform:scaleX(0.930);">PV</div>
<div class="t " style="left:275.80px;top:447.00px;font-size:12.90px;color:#707070;transform:scaleX(0.930);">Batterie</div>
<div class="t " style="left:275.80px;top:470.00px;font-size:12.90px;color:#707070;transform:scaleX(0.930);">Einspeisung</div>
<div class="r" style="left:276px;top:365.9px;width:46px;height:10.4px;background:#fff;"></div>
<div class="t " style="left:277.54px;top:367.00px;font-size:8.90px;color:#333;transform:scaleX(0.838);">w000063</div>
<svg class="i" style="left:310.00px;top:366.70px;width:7.80px;height:7.70px" viewBox="0 0 8 8" preserveAspectRatio="none"><g fill="none" stroke="#555" stroke-width="0.9"><circle cx="4" cy="1.1" r="0.85"/><path d="M4 1.95V7.6M2.6 3.1H5.4M0.7 4.6Q1 7.6 4 7.6Q7 7.6 7.3 4.6"/></g></svg>
<div class="r" style="left:276px;top:388.2px;width:46px;height:10.4px;background:#fff;"></div>
<div class="t " style="left:277.54px;top:389.00px;font-size:8.90px;color:#333;transform:scaleX(0.838);">w000064</div>
<svg class="i" style="left:310.00px;top:389.00px;width:7.80px;height:7.70px" viewBox="0 0 8 8" preserveAspectRatio="none"><g fill="none" stroke="#555" stroke-width="0.9"><circle cx="4" cy="1.1" r="0.85"/><path d="M4 1.95V7.6M2.6 3.1H5.4M0.7 4.6Q1 7.6 4 7.6Q7 7.6 7.3 4.6"/></g></svg>
<div class="r" style="left:276px;top:411.09999999999997px;width:46px;height:10.4px;background:#fff;"></div>
<div class="t " style="left:277.54px;top:412.00px;font-size:8.90px;color:#333;transform:scaleX(0.838);">w000065</div>
<svg class="i" style="left:310.00px;top:411.90px;width:7.80px;height:7.70px" viewBox="0 0 8 8" preserveAspectRatio="none"><g fill="none" stroke="#555" stroke-width="0.9"><circle cx="4" cy="1.1" r="0.85"/><path d="M4 1.95V7.6M2.6 3.1H5.4M0.7 4.6Q1 7.6 4 7.6Q7 7.6 7.3 4.6"/></g></svg>
<div class="r" style="left:276px;top:433.5px;width:46px;height:10.4px;background:#fff;"></div>
<div class="t " style="left:277.54px;top:435.00px;font-size:8.90px;color:#333;transform:scaleX(0.838);">w000066</div>
<svg class="i" style="left:310.00px;top:434.30px;width:7.80px;height:7.70px" viewBox="0 0 8 8" preserveAspectRatio="none"><g fill="none" stroke="#555" stroke-width="0.9"><circle cx="4" cy="1.1" r="0.85"/><path d="M4 1.95V7.6M2.6 3.1H5.4M0.7 4.6Q1 7.6 4 7.6Q7 7.6 7.3 4.6"/></g></svg>
<div class="r" style="left:276px;top:455.9px;width:46px;height:10.4px;background:#fff;"></div>
<div class="t " style="left:277.54px;top:457.00px;font-size:8.90px;color:#333;transform:scaleX(0.838);">w000070</div>
<svg class="i" style="left:310.00px;top:456.70px;width:7.80px;height:7.70px" viewBox="0 0 8 8" preserveAspectRatio="none"><g fill="none" stroke="#555" stroke-width="0.9"><circle cx="4" cy="1.1" r="0.85"/><path d="M4 1.95V7.6M2.6 3.1H5.4M0.7 4.6Q1 7.6 4 7.6Q7 7.6 7.3 4.6"/></g></svg>
<div class="t " style="left:690.30px;top:380.00px;font-size:12.60px;color:#6e6e6e;transform:scaleX(0.940);">NaN kWh</div>
<div class="t " style="left:690.30px;top:402.00px;font-size:12.60px;color:#6e6e6e;transform:scaleX(0.940);">NaN kWh</div>
<div class="t " style="left:690.30px;top:425.00px;font-size:12.60px;color:#6e6e6e;transform:scaleX(0.940);">NaN kWh</div>
<div class="t " style="left:690.30px;top:447.00px;font-size:12.60px;color:#6e6e6e;transform:scaleX(0.940);">NaN kWh</div>
<div class="t " style="left:690.30px;top:470.00px;font-size:12.60px;color:#6e6e6e;transform:scaleX(0.940);">NaN kWh</div>
<div class="t " style="left:638.34px;top:367.00px;font-size:8.70px;color:#333;transform:scaleX(0.840);">w000061</div>
<svg class="i" style="left:670.00px;top:366.80px;width:7.80px;height:7.70px" viewBox="0 0 8 8" preserveAspectRatio="none"><g fill="none" stroke="#555" stroke-width="0.9"><circle cx="4" cy="1.1" r="0.85"/><path d="M4 1.95V7.6M2.6 3.1H5.4M0.7 4.6Q1 7.6 4 7.6Q7 7.6 7.3 4.6"/></g></svg>
<div class="t " style="left:638.34px;top:390.00px;font-size:8.70px;color:#333;transform:scaleX(0.840);">w000067</div>
<svg class="i" style="left:670.00px;top:389.20px;width:7.80px;height:7.70px" viewBox="0 0 8 8" preserveAspectRatio="none"><g fill="none" stroke="#555" stroke-width="0.9"><circle cx="4" cy="1.1" r="0.85"/><path d="M4 1.95V7.6M2.6 3.1H5.4M0.7 4.6Q1 7.6 4 7.6Q7 7.6 7.3 4.6"/></g></svg>
<div class="t " style="left:638.34px;top:412.00px;font-size:8.70px;color:#333;transform:scaleX(0.840);">w000068</div>
<svg class="i" style="left:670.00px;top:411.70px;width:7.80px;height:7.70px" viewBox="0 0 8 8" preserveAspectRatio="none"><g fill="none" stroke="#555" stroke-width="0.9"><circle cx="4" cy="1.1" r="0.85"/><path d="M4 1.95V7.6M2.6 3.1H5.4M0.7 4.6Q1 7.6 4 7.6Q7 7.6 7.3 4.6"/></g></svg>
<div class="t " style="left:638.34px;top:434.00px;font-size:8.70px;color:#333;transform:scaleX(0.840);">w000069</div>
<svg class="i" style="left:670.00px;top:433.70px;width:7.80px;height:7.70px" viewBox="0 0 8 8" preserveAspectRatio="none"><g fill="none" stroke="#555" stroke-width="0.9"><circle cx="4" cy="1.1" r="0.85"/><path d="M4 1.95V7.6M2.6 3.1H5.4M0.7 4.6Q1 7.6 4 7.6Q7 7.6 7.3 4.6"/></g></svg>
<div class="t " style="left:638.34px;top:457.00px;font-size:8.70px;color:#333;transform:scaleX(0.840);">w000071</div>
<svg class="i" style="left:670.00px;top:456.70px;width:7.80px;height:7.70px" viewBox="0 0 8 8" preserveAspectRatio="none"><g fill="none" stroke="#555" stroke-width="0.9"><circle cx="4" cy="1.1" r="0.85"/><path d="M4 1.95V7.6M2.6 3.1H5.4M0.7 4.6Q1 7.6 4 7.6Q7 7.6 7.3 4.6"/></g></svg>
<div class="t " style="left:473.04px;top:386.00px;font-size:8.70px;color:#8a8a8a;transform:scaleX(0.851);">w000073</div>
<svg class="i" style="left:505.00px;top:386.00px;width:7.90px;height:7.70px" viewBox="0 0 8 8" preserveAspectRatio="none"><g fill="none" stroke="#8a8a8a" stroke-width="0.9"><circle cx="4" cy="1.1" r="0.85"/><path d="M4 1.95V7.6M2.6 3.1H5.4M0.7 4.6Q1 7.6 4 7.6Q7 7.6 7.3 4.6"/></g></svg>
<svg class="i" style="left:471.3px;top:395.2px;width:11.3px;height:11.6px;" viewBox="0 0 11.3 11.6"><path d="M0.5 0.5 H8 L10.8 3.3 V7 L7 11.1 H0.5 Z" fill="#eef3fa" stroke="#d0d0d0"/><path d="M0.8 11 Q3 7 7 8.5 L4.5 11 Z" fill="#b8dcb0"/></svg>
<div class="t " style="left:482.90px;top:398.00px;font-size:11.60px;color:#b0b0b0;transform:scaleX(1.035);">strommast</div>
<div class="r" style="left:756px;top:115px;width:6px;height:606px;background:#eef0f0;"></div>
<div class="r" style="left:757.5px;top:409px;width:3.5px;height:18px;background:#383850;border-radius:1.75px"></div>
<div class="r" style="left:768px;top:121.2px;width:500px;height:25.5px;background:#e6e6e6;border-radius:4px"></div>
<svg class="i" style="left:773.67px;top:123.67px;width:18.67px;height:18.67px;" viewBox="0 0 24 24" preserveAspectRatio="none"><path fill="#333" d="M19 5v14H5V5h14m1.1-2H3.9c-.5 0-.9.4-.9.9v16.2c0 .4.4.9.9.9h16.2c.4 0 .9-.5.9-.9V3.9c0-.5-.5-.9-.9-.9zM11 7h6v2h-6V7zm0 4h6v2h-6v-2zm0 4h6v2h-6zM7 7h2v2H7zm0 4h2v2H7zm0 4h2v2H7z"/></svg>
<div class="t " style="left:795.20px;top:126.00px;font-size:13.70px;color:#1e1e1e;transform:scaleX(0.911);">Attribute</div>
<svg class="i" style="left:1191.04px;top:127.15px;width:18.32px;height:17.20px;" viewBox="0 0 24 24" preserveAspectRatio="none"><path fill="#555" d="M12 5.83L15.17 9l1.41-1.41L12 3 7.41 7.59 8.83 9 12 5.83zm0 12.34L8.83 15l-1.41 1.41L12 21l4.59-4.59L15.17 15 12 18.17z"/></svg>
<svg class="i" style="left:1218.19px;top:126.80px;width:18.82px;height:18.00px;" viewBox="0 0 24 24" preserveAspectRatio="none"><path fill="#555" d="M7.41 18.59L8.83 20 12 16.83 15.17 20l1.41-1.41L12 14l-4.59 4.59zm9.18-13.18L15.17 4 12 7.17 8.83 4 7.41 5.41 12 10l4.59-4.59z"/></svg>
<svg class="i" style="left:1246.95px;top:125.69px;width:18.00px;height:17.31px;" viewBox="0 0 24 24" preserveAspectRatio="none"><path fill="#555" d="M19 6.41L17.59 5 12 10.59 6.41 5 5 6.41 10.59 12 5 17.59 6.41 19 12 13.41 17.59 19 19 17.59 13.41 12z"/></svg>
<div class="t " style="left:780.30px;top:161.00px;font-size:10.60px;color:#666;transform:scaleX(0.917);">SEITE</div>
<div class="t " style="left:833.00px;top:161.00px;font-size:10.60px;color:#3d9ed8;transform:scaleX(0.936);">WIDGET</div>
<div class="t " style="left:897.60px;top:161.00px;font-size:10.60px;color:#666;transform:scaleX(0.900);">CSS</div>
<div class="t " style="left:941.50px;top:161.00px;font-size:10.60px;color:#666;transform:scaleX(0.937);">SKRIPTE</div>
<div class="r" style="left:821px;top:180.2px;width:64px;height:1.9px;background:#2a93d5;"></div>
<svg class="i" style="left:768.5px;top:189.8px;width:29.3px;height:14.6px;" viewBox="0 0 29.3 14.6"><rect width="29.3" height="14.6" rx="2.5" fill="#333"/><path d="M2 4.2H9.5M2 7.6H8.5M2 11H20" stroke="#cfcfcf" stroke-width="1.5" stroke-dasharray="1.3 0.4"/></svg>
<div class="t " style="left:801.56px;top:185.00px;font-size:12.30px;color:#1e1e1e;transform:scaleX(0.926);">w000072</div>
<div class="t " style="left:854.70px;top:185.00px;font-size:9.60px;color:#4d5a1c;font-weight:700;font-style:italic;transform:scaleX(0.908);">inventwo design</div>
<div class="t " style="left:854.70px;top:200.00px;font-size:9.60px;color:#2b3040;font-style:italic;transform:scaleX(0.897);">Universal (Schalter, Taster, Nav &amp; mehr)</div>
<div class="r" style="left:768px;top:219.2px;width:492px;height:20.5px;background:#e6e6e6;border-radius:3px;"></div>
<svg class="i" style="left:770.30px;top:220.70px;width:14.40px;height:15.00px;" viewBox="0 0 24 24" preserveAspectRatio="none"><path fill="#1e1e1e" d="M4.25 5.61C6.27 8.2 10 13 10 13v6c0 .55.45 1 1 1h2c.55 0 1-.45 1-1v-6s3.72-4.8 5.74-7.39c.51-.66.04-1.61-.79-1.61H5.04c-.83 0-1.3.95-.79 1.61z"/></svg>
<div class="t " style="left:784.60px;top:226.00px;font-size:12.20px;color:#1e1e1e;transform:scaleX(0.941);">Generell</div>
<svg class="i" style="left:1229.50px;top:223.30px;width:12.80px;height:12.80px;" viewBox="0 0 24 24" preserveAspectRatio="none"><path fill="#7a7a7a" d="M19 5v14H5V5h14m0-2H5c-1.1 0-2 .9-2 2v14c0 1.1.9 2 2 2h14c1.1 0 2-.9 2-2V5c0-1.1-.9-2-2-2z"/></svg>
<div class="r" style="left:768px;top:248px;width:492px;height:20.6px;background:#e6e6e6;border-radius:3px;"></div>
<div class="t " style="left:769.80px;top:253.00px;font-size:12.20px;color:#1e1e1e;transform:scaleX(0.971);">Sichtbarkeit</div>
<svg class="i" style="left:1229.50px;top:252.40px;width:12.80px;height:12.80px;" viewBox="0 0 24 24" preserveAspectRatio="none"><path fill="#7a7a7a" d="M19 5v14H5V5h14m0-2H5c-1.1 0-2 .9-2 2v14c0 1.1.9 2 2 2h14c1.1 0 2-.9 2-2V5c0-1.1-.9-2-2-2z"/></svg>
<div class="r" style="left:768px;top:276.3px;width:492px;height:138.1px;background:#e6e6e6;border-radius:3px;"></div>
<div class="t " style="left:769.60px;top:282.00px;font-size:12.60px;color:#1e1e1e;font-weight:700;transform:scaleX(0.945);">Allgemein</div>
<svg class="i" style="left:1229.50px;top:280.60px;width:12.80px;height:12.80px;" viewBox="0 0 24 24" preserveAspectRatio="none"><path fill="#3399d0" d="M19 3H5c-1.11 0-2 .9-2 2v14c0 1.1.89 2 2 2h14c1.11 0 2-.9 2-2V5c0-1.1-.89-2-2-2zm-9 14l-5-5 1.41-1.41L10 14.17l7.59-7.59L19 8l-9 9z"/></svg>
<svg class="i" style="left:1242.35px;top:276.69px;width:17.40px;height:20.73px;" viewBox="0 0 24 24" preserveAspectRatio="none"><path fill="#444" d="M12 8l-6 6 1.41 1.41L12 10.83l4.59 4.58L18 14z"/></svg>
<div class="t " style="left:770.00px;top:303.00px;font-size:10.40px;color:#222;transform:scaleX(0.878);">Typ</div>
<svg class="i" style="left:787.12px;top:299.02px;width:17.76px;height:17.76px;" viewBox="0 0 24 24" preserveAspectRatio="none"><path fill="#1b1b1b" d="M12 2C6.48 2 2 6.48 2 12s4.48 10 10 10 10-4.48 10-10S17.52 2 12 2zm1 15h-2v-6h2v6zm0-8h-2V7h2v2z"/></svg>
<svg class="i" style="left:900.9px;top:302.3px;width:10.2px;height:6px;" viewBox="0 0 10.2 6"><rect x="0.7" y="0.7" width="8.8" height="4.6" rx="2.3" fill="#f4f4f4" stroke="#2a2a2a" stroke-width="1.3"/><rect x="4.1" y="0.2" width="2" height="5.6" fill="#6a6a6a"/></svg>
<div class="t " style="left:915.00px;top:303.00px;font-size:10.40px;color:#222;transform:scaleX(0.929);">Im Dialog anzeigen</div>
<div class="r" style="left:915px;top:316px;width:345px;height:1px;background:#7a7a7a;"></div>
<svg class="i" style="left:1246.30px;top:299.00px;width:14.40px;height:16.32px;" viewBox="0 0 24 24" preserveAspectRatio="none"><path fill="#555" d="M7 10l5 5 5-5z"/></svg>
<div class="t " style="left:770.00px;top:324.00px;font-size:10.40px;color:#222;transform:scaleX(0.923);">Modus</div>
<svg class="i" style="left:801.12px;top:320.22px;width:17.76px;height:17.76px;" viewBox="0 0 24 24" preserveAspectRatio="none"><path fill="#1b1b1b" d="M12 2C6.48 2 2 6.48 2 12s4.48 10 10 10 10-4.48 10-10S17.52 2 12 2zm1 15h-2v-6h2v6zm0-8h-2V7h2v2z"/></svg>
<svg class="i" style="left:900.9px;top:323.5px;width:10.2px;height:6px;" viewBox="0 0 10.2 6"><rect x="0.7" y="0.7" width="8.8" height="4.6" rx="2.3" fill="#f4f4f4" stroke="#2a2a2a" stroke-width="1.3"/><rect x="4.1" y="0.2" width="2" height="5.6" fill="#6a6a6a"/></svg>
<div class="t " style="left:915.00px;top:324.00px;font-size:10.40px;color:#222;transform:scaleX(0.932);">Einzeltaste</div>
<div class="r" style="left:915px;top:336.3px;width:345px;height:1px;background:#7a7a7a;"></div>
<svg class="i" style="left:1246.30px;top:320.00px;width:14.40px;height:16.32px;" viewBox="0 0 24 24" preserveAspectRatio="none"><path fill="#555" d="M7 10l5 5 5-5z"/></svg>
<div class="t " style="left:770.00px;top:353.00px;font-size:10.40px;color:#222;transform:scaleX(0.945);">Objekt Identifikation</div>
<svg class="i" style="left:900.9px;top:351.5px;width:10.2px;height:6px;" viewBox="0 0 10.2 6"><rect x="0.7" y="0.7" width="8.8" height="4.6" rx="2.3" fill="#f4f4f4" stroke="#2a2a2a" stroke-width="1.3"/><rect x="4.1" y="0.2" width="2" height="5.6" fill="#6a6a6a"/></svg>
<div class="t " style="left:915.00px;top:347.00px;font-size:10.40px;color:#222;transform:scaleX(0.948);">nothing_selected</div>
<div class="r" style="left:915px;top:362px;width:345px;height:1px;background:#7a7a7a;"></div>
<div class="t " style="left:1232.00px;top:348.00px;font-size:10.40px;color:#3d9ed8;">...</div>
<div class="t " style="left:915.00px;top:365.00px;font-size:10.40px;color:#222;font-style:italic;transform:scaleX(0.882);">ignored state</div>
<div class="t " style="left:770.00px;top:382.00px;font-size:10.40px;color:#222;transform:scaleX(0.864);">Sicht</div>
<svg class="i" style="left:900.9px;top:381px;width:10.2px;height:6px;" viewBox="0 0 10.2 6"><rect x="0.7" y="0.7" width="8.8" height="4.6" rx="2.3" fill="#f4f4f4" stroke="#2a2a2a" stroke-width="1.3"/><rect x="4.1" y="0.2" width="2" height="5.6" fill="#6a6a6a"/></svg>
<div class="t " style="left:915.00px;top:381.00px;font-size:10.40px;color:#222;transform:scaleX(0.938);">ChartsDialog</div>
<div class="r" style="left:915px;top:391.8px;width:345px;height:1px;background:#7a7a7a;"></div>
<div class="t " style="left:770.00px;top:400.00px;font-size:10.40px;color:#222;transform:scaleX(0.923);">Wert true</div>
<svg class="i" style="left:900.9px;top:400px;width:10.2px;height:6px;" viewBox="0 0 10.2 6"><rect x="0.7" y="0.7" width="8.8" height="4.6" rx="2.3" fill="#f4f4f4" stroke="#2a2a2a" stroke-width="1.3"/><rect x="4.1" y="0.2" width="2" height="5.6" fill="#6a6a6a"/></svg>
<div class="r" style="left:915px;top:410.7px;width:345px;height:1px;background:#7a7a7a;"></div>
<div class="r" style="left:768px;top:423.1px;width:492px;height:300px;background:#e6e6e6;border-radius:3px;"></div>
<div class="t " style="left:770.00px;top:428.00px;font-size:12.60px;color:#1e1e1e;font-weight:700;transform:scaleX(0.956);">Typ - Im Dialog anzeigen</div>
<svg class="i" style="left:1229.50px;top:426.90px;width:12.80px;height:12.80px;" viewBox="0 0 24 24" preserveAspectRatio="none"><path fill="#3399d0" d="M19 3H5c-1.11 0-2 .9-2 2v14c0 1.1.89 2 2 2h14c1.11 0 2-.9 2-2V5c0-1.1-.89-2-2-2zm-9 14l-5-5 1.41-1.41L10 14.17l7.59-7.59L19 8l-9 9z"/></svg>
<svg class="i" style="left:1242.35px;top:423.09px;width:17.40px;height:20.73px;" viewBox="0 0 24 24" preserveAspectRatio="none"><path fill="#444" d="M12 8l-6 6 1.41 1.41L12 10.83l4.59 4.58L18 14z"/></svg>
<div class="t " style="left:770.00px;top:450.00px;font-size:10.40px;color:#222;transform:scaleX(0.934);">Dialog Vollbild</div>
<svg class="i" style="left:900.9px;top:449.3px;width:10.2px;height:6px;" viewBox="0 0 10.2 6"><rect x="0.7" y="0.7" width="8.8" height="4.6" rx="2.3" fill="#f4f4f4" stroke="#2a2a2a" stroke-width="1.3"/><rect x="4.1" y="0.2" width="2" height="5.6" fill="#6a6a6a"/></svg>
<svg class="i" style="left:914.13px;top:448.20px;width:13.33px;height:12.80px;" viewBox="0 0 24 24" preserveAspectRatio="none"><path fill="#808080" d="M19 5v14H5V5h14m0-2H5c-1.1 0-2 .9-2 2v14c0 1.1.9 2 2 2h14c1.1 0 2-.9 2-2V5c0-1.1-.9-2-2-2z"/></svg>
<div class="t " style="left:770.00px;top:469.00px;font-size:10.40px;color:#222;transform:scaleX(0.898);">Durch Klicken von außen</div>
<div class="t " style="left:770.00px;top:485.00px;font-size:10.40px;color:#222;transform:scaleX(0.872);">schließen</div>
<svg class="i" style="left:900.9px;top:484px;width:10.2px;height:6px;" viewBox="0 0 10.2 6"><rect x="0.7" y="0.7" width="8.8" height="4.6" rx="2.3" fill="#f4f4f4" stroke="#2a2a2a" stroke-width="1.3"/><rect x="4.1" y="0.2" width="2" height="5.6" fill="#6a6a6a"/></svg>
<svg class="i" style="left:914.13px;top:475.20px;width:13.33px;height:12.80px;" viewBox="0 0 24 24" preserveAspectRatio="none"><path fill="#808080" d="M19 5v14H5V5h14m0-2H5c-1.1 0-2 .9-2 2v14c0 1.1.9 2 2 2h14c1.1 0 2-.9 2-2V5c0-1.1-.9-2-2-2z"/></svg>
<div class="t " style="left:770.00px;top:506.00px;font-size:10.40px;color:#222;transform:scaleX(0.934);">Dialogbreite</div>
<svg class="i" style="left:900.9px;top:505px;width:10.2px;height:6px;" viewBox="0 0 10.2 6"><rect x="0.7" y="0.7" width="8.8" height="4.6" rx="2.3" fill="#f4f4f4" stroke="#2a2a2a" stroke-width="1.3"/><rect x="4.1" y="0.2" width="2" height="5.6" fill="#6a6a6a"/></svg>
<div class="r" style="left:917.8px;top:508.5px;width:238.9000000000001px;height:3px;background:#3399d0;border-radius:1.5px"></div>
<div class="r" style="left:1156.7px;top:509px;width:59.899999999999864px;height:2px;background:#9fcbe6"></div>
<div class="r" style="left:1151.7px;top:505px;width:10px;height:10px;background:#3399d0;border-radius:50%"></div>
<div class="t " style="left:1223.00px;top:502.00px;font-size:10.40px;color:#222;transform:scaleX(0.921);">800</div>
<div class="r" style="left:1223px;top:519.5px;width:37px;height:1px;background:#7a7a7a;"></div>
<div class="t " style="left:770.00px;top:530.00px;font-size:10.40px;color:#222;transform:scaleX(0.925);">Dialoghöhe</div>
<svg class="i" style="left:900.9px;top:528.8px;width:10.2px;height:6px;" viewBox="0 0 10.2 6"><rect x="0.7" y="0.7" width="8.8" height="4.6" rx="2.3" fill="#f4f4f4" stroke="#2a2a2a" stroke-width="1.3"/><rect x="4.1" y="0.2" width="2" height="5.6" fill="#6a6a6a"/></svg>
<div class="r" style="left:917.8px;top:531.9px;width:179.0px;height:3px;background:#3399d0;border-radius:1.5px"></div>
<div class="r" style="left:1096.8px;top:532.4px;width:119.79999999999995px;height:2px;background:#9fcbe6"></div>
<div class="r" style="left:1091.8px;top:528.4px;width:10px;height:10px;background:#3399d0;border-radius:50%"></div>
<div class="t " style="left:1223.00px;top:526.00px;font-size:10.40px;color:#222;transform:scaleX(0.921);">600</div>
<div class="r" style="left:1223px;top:543px;width:37px;height:1px;background:#7a7a7a;"></div>
<div class="t " style="left:770.00px;top:553.00px;font-size:10.40px;color:#222;transform:scaleX(0.899);">Polsterung</div>
<svg class="i" style="left:900.9px;top:552px;width:10.2px;height:6px;" viewBox="0 0 10.2 6"><rect x="0.7" y="0.7" width="8.8" height="4.6" rx="2.3" fill="#f4f4f4" stroke="#2a2a2a" stroke-width="1.3"/><rect x="4.1" y="0.2" width="2" height="5.6" fill="#6a6a6a"/></svg>
<div class="r" style="left:917.8px;top:555.5px;width:60.200000000000045px;height:3px;background:#3399d0;border-radius:1.5px"></div>
<div class="r" style="left:978px;top:556px;width:238.5999999999999px;height:2px;background:#9fcbe6"></div>
<div class="r" style="left:973px;top:552px;width:10px;height:10px;background:#3399d0;border-radius:50%"></div>
<div class="t " style="left:1223.00px;top:549.00px;font-size:10.40px;color:#222;">10</div>
<div class="r" style="left:1223px;top:567px;width:37px;height:1px;background:#7a7a7a;"></div>
<div class="t " style="left:770.00px;top:582.00px;font-size:10.40px;color:#222;transform:scaleX(0.948);">Hintergrund</div>
<svg class="i" style="left:900.9px;top:580.8px;width:10.2px;height:6px;" viewBox="0 0 10.2 6"><rect x="0.7" y="0.7" width="8.8" height="4.6" rx="2.3" fill="#f4f4f4" stroke="#2a2a2a" stroke-width="1.3"/><rect x="4.1" y="0.2" width="2" height="5.6" fill="#6a6a6a"/></svg>
<div class="t " style="left:915.00px;top:589.00px;font-size:10.40px;color:#222;transform:scaleX(0.909);">rgb(18, 18, 18)</div>
<div class="r" style="left:915px;top:601.7px;width:285px;height:1px;background:#7a7a7a;"></div>
<svg class="i" style="left:1201.46px;top:585.33px;width:14.57px;height:13.33px;" viewBox="0 0 24 24" preserveAspectRatio="none"><path fill="#666" d="M6 19c0 1.1.9 2 2 2h8c1.1 0 2-.9 2-2V7H6v12zM19 4h-3.5l-1-1h-5l-1 1H5v2h14V4z"/></svg>
<div class="r" style="left:1218.5px;top:582.7px;width:36px;height:22px;background:#fff;border:1px solid #dcdcdc;border-radius:2px"></div>
<div class="r" style="left:1223px;top:587px;width:27px;height:10.5px;background:#121212;border-radius:1.5px"></div>
<div class="r" style="left:770px;top:604.7px;width:490px;height:3.3px;background:#c6c6c6;"></div>
<div class="t " style="left:781.40px;top:613.00px;font-size:9.40px;color:#1d531d;font-style:italic;transform:scaleX(0.904);">vis_2_widgets_inventwo_titlebar</div>
<div class="t " style="left:770.00px;top:630.00px;font-size:10.40px;color:#222;transform:scaleX(0.910);">Titel</div>
<svg class="i" style="left:900.9px;top:628.8px;width:10.2px;height:6px;" viewBox="0 0 10.2 6"><rect x="0.7" y="0.7" width="8.8" height="4.6" rx="2.3" fill="#f4f4f4" stroke="#2a2a2a" stroke-width="1.3"/><rect x="4.1" y="0.2" width="2" height="5.6" fill="#6a6a6a"/></svg>
<div class="r" style="left:915px;top:642px;width:345px;height:1px;background:#7a7a7a;"></div>
<svg class="i" style="left:1229.40px;top:627.40px;width:12.80px;height:12.80px;" viewBox="0 0 24 24" preserveAspectRatio="none"><path fill="#3399d0" d="M3 17.25V21h3.75L17.81 9.94l-3.75-3.75L3 17.25zM20.71 7.04c.39-.39.39-1.02 0-1.41l-2.34-2.34c-.39-.39-1.020-.39-1.41 0l-1.83 1.83 3.75 3.75 1.830-1.83z"/></svg>
<div class="t " style="left:770.00px;top:657.00px;font-size:10.40px;color:#222;transform:scaleX(0.847);">Farbe</div>
<svg class="i" style="left:900.9px;top:656.9px;width:10.2px;height:6px;" viewBox="0 0 10.2 6"><rect x="0.7" y="0.7" width="8.8" height="4.6" rx="2.3" fill="#f4f4f4" stroke="#2a2a2a" stroke-width="1.3"/><rect x="4.1" y="0.2" width="2" height="5.6" fill="#6a6a6a"/></svg>
<div class="t " style="left:915.00px;top:664.00px;font-size:10.40px;color:#222;transform:scaleX(0.927);">rgb(255,255,255)</div>
<div class="r" style="left:915px;top:676.8px;width:285px;height:1px;background:#7a7a7a;"></div>
<svg class="i" style="left:1201.46px;top:661.42px;width:14.57px;height:12.67px;" viewBox="0 0 24 24" preserveAspectRatio="none"><path fill="#666" d="M6 19c0 1.1.9 2 2 2h8c1.1 0 2-.9 2-2V7H6v12zM19 4h-3.5l-1-1h-5l-1 1H5v2h14V4z"/></svg>
<div class="r" style="left:1218.6px;top:658.8px;width:35.7px;height:18.4px;background:#fff;border:1px solid #dcdcdc;border-radius:2px"></div>
<div class="t " style="left:770.00px;top:686.00px;font-size:10.40px;color:#222;transform:scaleX(0.855);">Größe</div>
<svg class="i" style="left:900.9px;top:685.8px;width:10.2px;height:6px;" viewBox="0 0 10.2 6"><rect x="0.7" y="0.7" width="8.8" height="4.6" rx="2.3" fill="#f4f4f4" stroke="#2a2a2a" stroke-width="1.3"/><rect x="4.1" y="0.2" width="2" height="5.6" fill="#6a6a6a"/></svg>
<div class="r" style="left:917.8px;top:689.3px;width:119.60000000000014px;height:3px;background:#3399d0;border-radius:1.5px"></div>
<div class="r" style="left:1037.4px;top:689.8px;width:179.5999999999999px;height:2px;background:#9fcbe6"></div>
<div class="r" style="left:1032.4px;top:685.8px;width:10px;height:10px;background:#3399d0;border-radius:50%"></div>
<div class="t " style="left:1223.00px;top:684.00px;font-size:10.40px;color:#222;">20</div>
<div class="r" style="left:1223px;top:700.6px;width:37px;height:1px;background:#7a7a7a;"></div>
<div class="r" style="left:770px;top:704px;width:490px;height:3px;background:#c6c6c6;"></div>
<div class="t " style="left:781.40px;top:712.00px;font-size:9.40px;color:#1d531d;font-style:italic;transform:scaleX(0.892);">vis_2_widgets_inventwo_close_button</div>
<div class="r" style="left:1261px;top:212px;width:6.8px;height:509px;background:#c8c8c8;"></div>
<div class="r" style="left:1261.2px;top:212.2px;width:6.6px;height:178.8px;background:#585858;border-radius:3.3px"></div>
<div class="r" style="left:0px;top:721px;width:1277px;height:3px;background:#f7f7f7;"></div>
<svg class="i" style="left:2px;top:713px;width:8px;height:8px;" viewBox="0 0 8 8"><path d="M0 0 V8 H8 A8 8 0 0 1 0 0 Z" fill="#f7f7f7"/></svg>
<svg class="i" style="left:1267px;top:713px;width:8px;height:8px;" viewBox="0 0 8 8"><path d="M8 0 V8 H0 A8 8 0 0 0 8 0 Z" fill="#f7f7f7"/></svg>

</body></html>
